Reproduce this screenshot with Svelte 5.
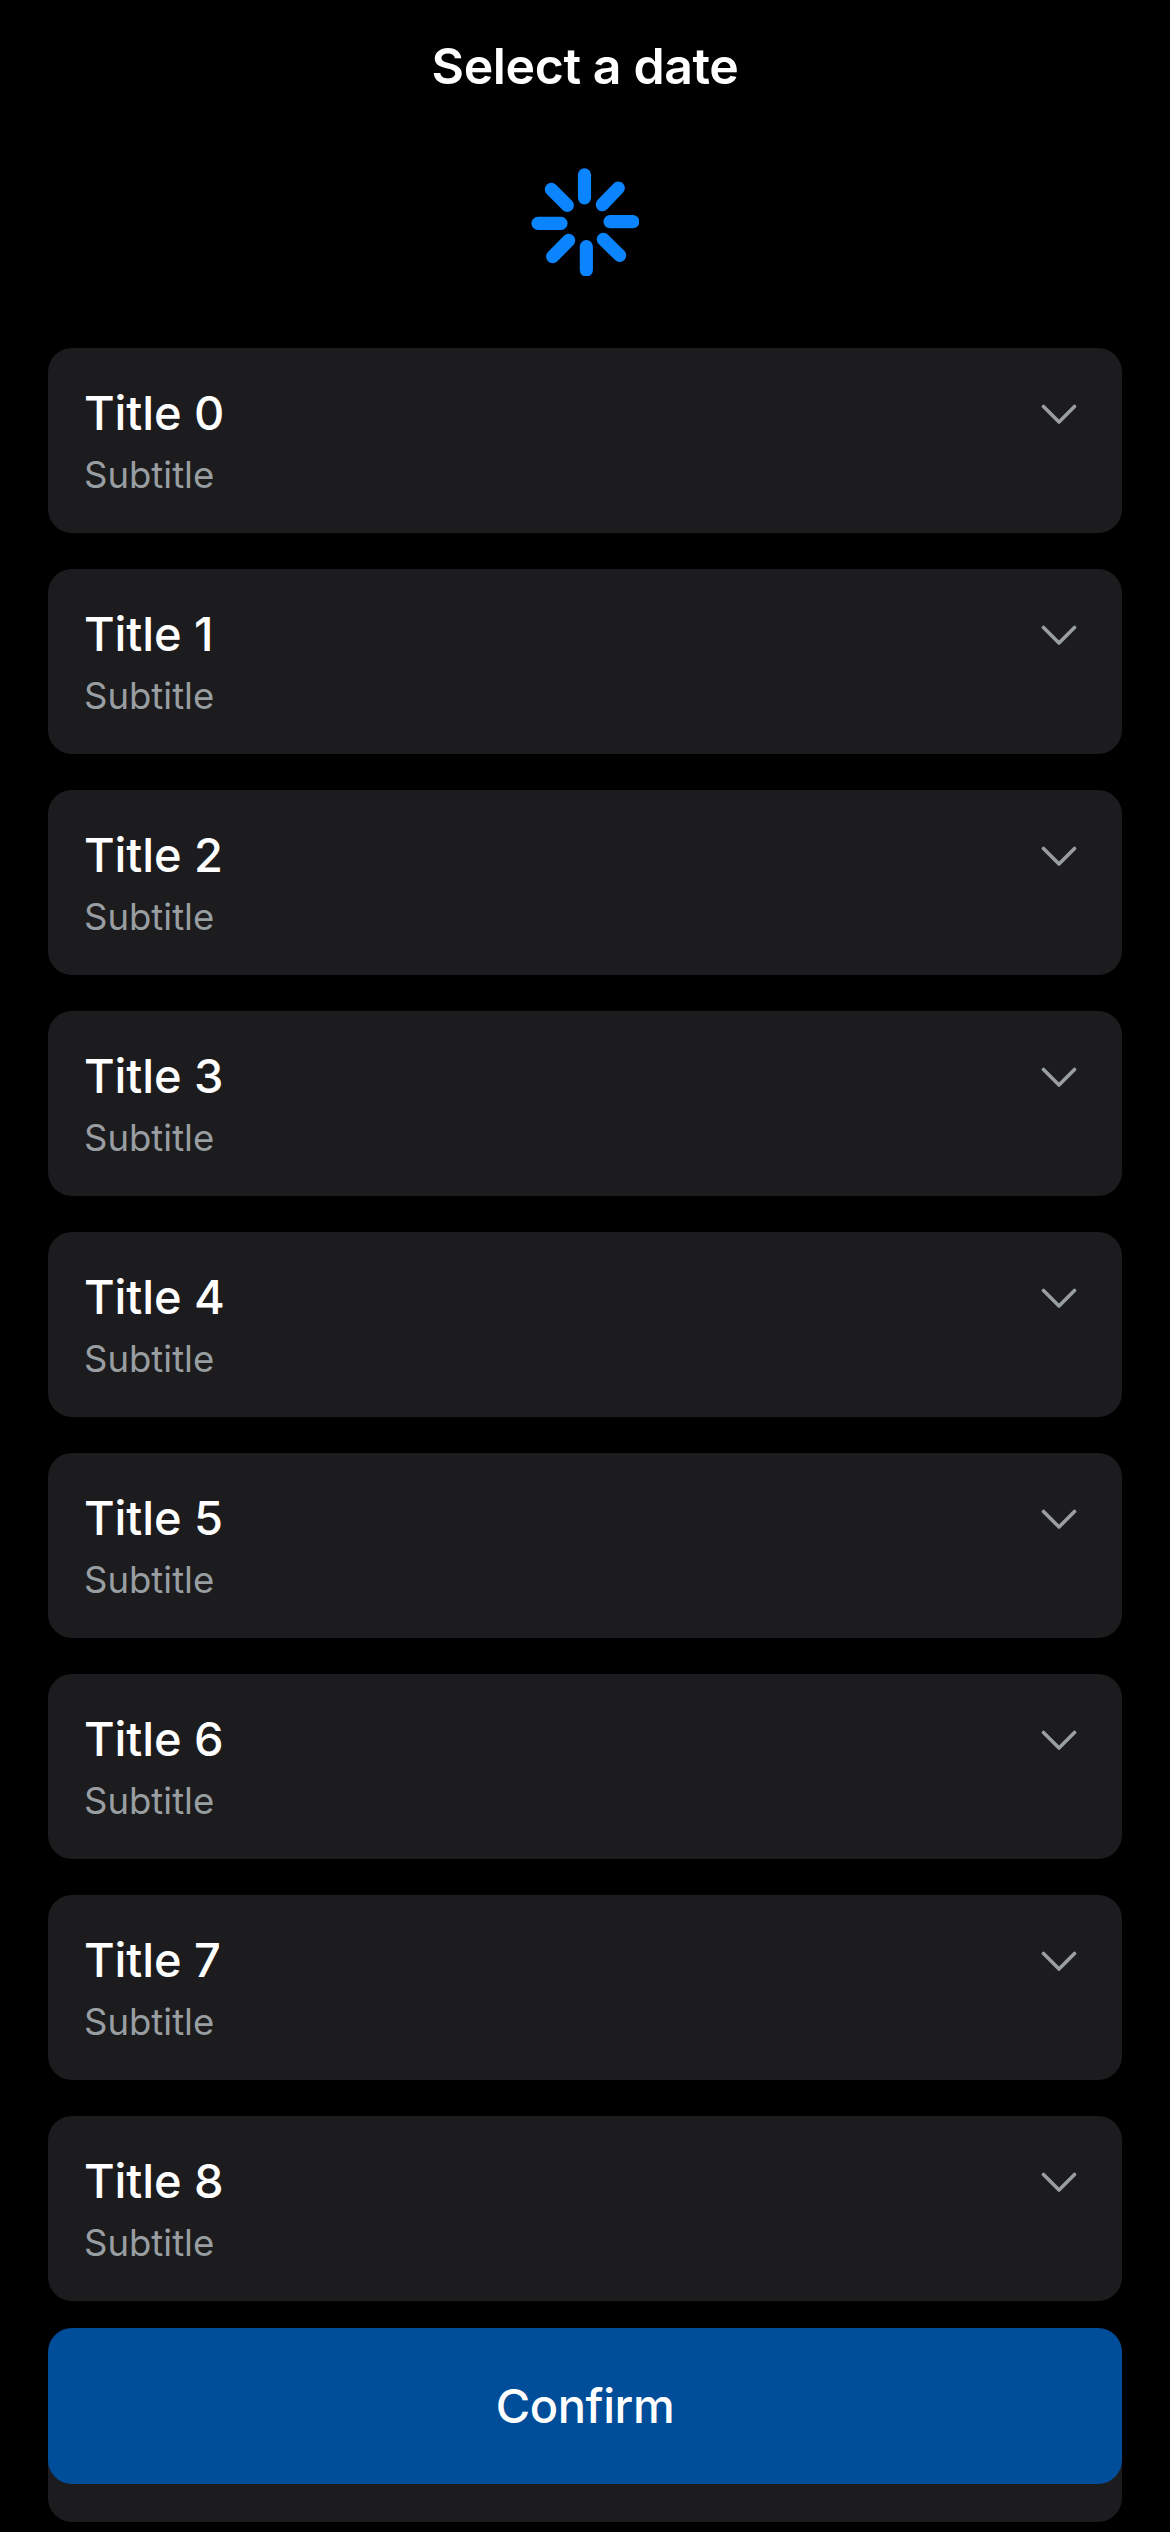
<script>
  const cards = Array.from({ length: 10 }, (_, i) => ({ title: `Title ${i}`, subtitle: 'Subtitle' }));
  const spokes = [
    'M160.5 20.5V89.5',
    'M262 60L214 110',
    'M237 161H305.5',
    'M217 214L266 262',
    'M166 236V306',
    'M113 217L65 266',
    'M21 166H90',
    'M61 64L109 112'
  ];
</script>

<main class="screen">
  <header class="header"><h1>Select a date</h1></header>

  <div class="loading">
    <svg class="spinner" viewBox="0 0 324 324">
      {#each spokes as d}
        <path {d} />
      {/each}
    </svg>
  </div>

  <section class="list">
    {#each cards as card}
      <article class="card">
        <div class="texts">
          <h2>{card.title}</h2>
          <p>{card.subtitle}</p>
        </div>
        <svg class="chevron" viewBox="0 0 36 21">
          <path d="M2.5 2.5L18 18L33.5 2.5" />
        </svg>
      </article>
    {/each}
  </section>

  <button class="confirm">Confirm</button>
</main>

<style>
  :global(body) {
    background: #000;
  }

  .screen {
    position: relative;
    display: flex;
    flex-direction: column;
    box-sizing: border-box;
    height: 2532px;
    padding: 0 48px;
    overflow: hidden;
    background: #000;
    color: #fff;
    font-family: Inter, 'Liberation Sans', sans-serif;
  }

  .header {
    display: flex;
    align-items: center;
    justify-content: center;
    flex: none;
    height: 132px;
  }

  h1,
  h2,
  p {
    margin: 0;
    white-space: nowrap;
  }

  h1 {
    font-size: 50px;
    font-weight: 600;
    line-height: 60px;
    letter-spacing: -0.4px;
  }

  .loading {
    display: flex;
    justify-content: center;
    flex: none;
    height: 180px;
    padding-top: 36px;
  }

  .spinner {
    width: 108px;
    height: 108px;
  }

  .spinner path {
    fill: none;
    stroke: #0a84ff;
    stroke-width: 39.5;
    stroke-linecap: round;
  }

  .list {
    display: flex;
    flex-direction: column;
    flex: none;
    gap: 36px;
  }

  .card {
    display: flex;
    align-items: flex-start;
    justify-content: space-between;
    box-sizing: border-box;
    height: 185px;
    padding: 36px 45px 0 36px;
    border-radius: 24px;
    background: #1c1c1e;
  }

  h2 {
    font-size: 47px;
    font-weight: 500;
    line-height: 58px;
    letter-spacing: -0.1px;
  }

  p {
    margin-top: 10px;
    color: #989ea2;
    font-size: 36.5px;
    line-height: 46px;
    letter-spacing: 0;
  }

  .chevron {
    width: 36px;
    height: 21px;
    margin-top: 20px;
  }

  .chevron path {
    fill: none;
    stroke: #989ea2;
    stroke-width: 3.6;
    stroke-linecap: round;
    stroke-linejoin: round;
  }

  .confirm {
    position: absolute;
    right: 48px;
    bottom: 48px;
    left: 48px;
    height: 156px;
    padding: 0;
    border: 0;
    border-radius: 24px;
    background: #004e9a;
    color: #fff;
    font: 500 47px/58px Inter, 'Liberation Sans', sans-serif;
    letter-spacing: -0.4px;
  }
</style>
